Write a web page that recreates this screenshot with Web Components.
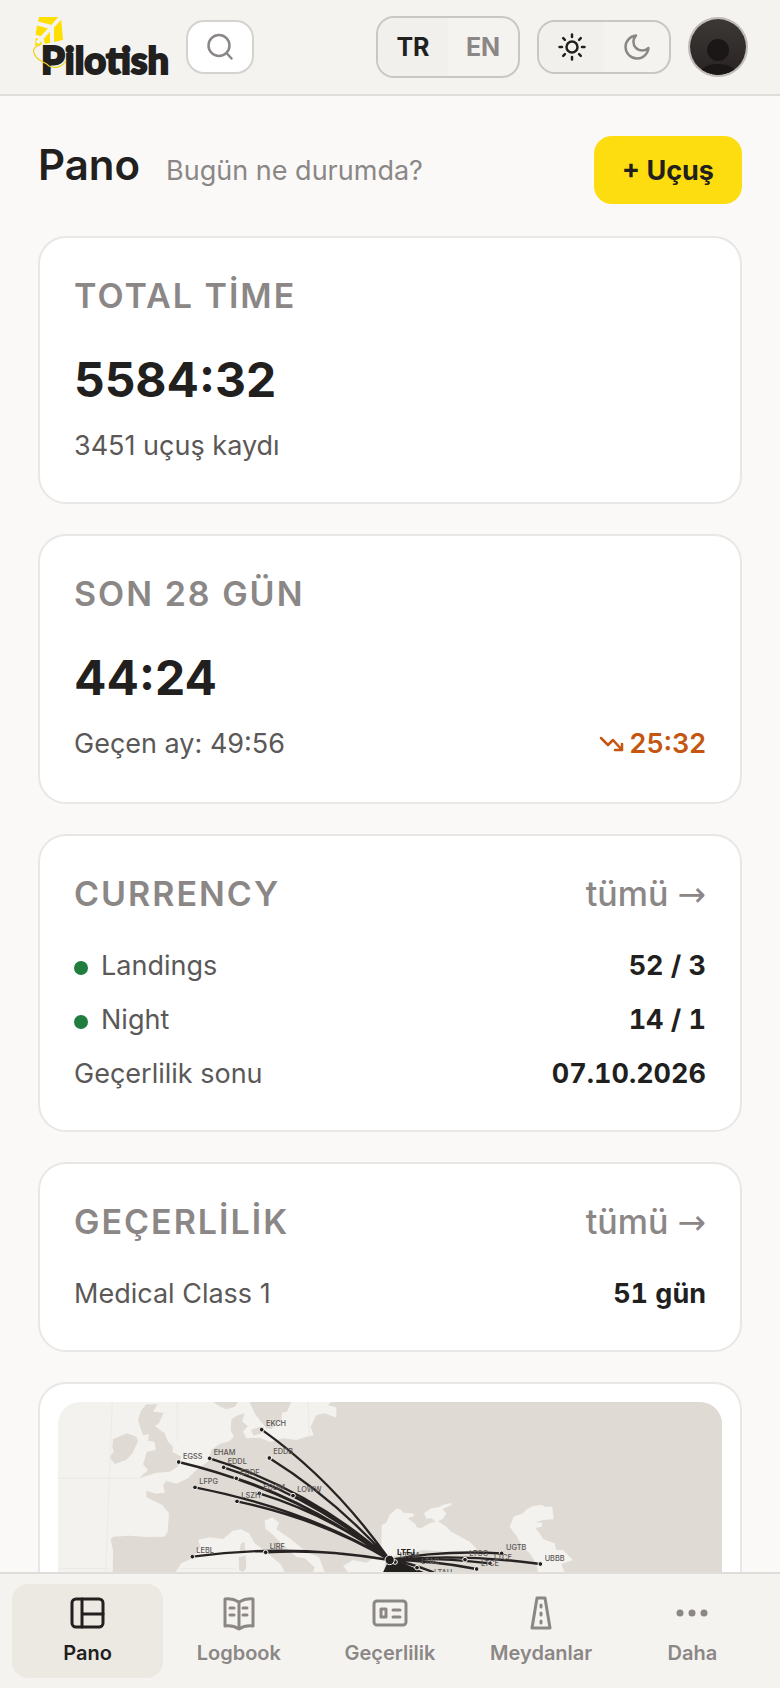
<!DOCTYPE html>
<html lang="tr">
<head>
<meta charset="utf-8">
<meta name="viewport" content="width=device-width, initial-scale=1">
<title>Pilotish</title>
<style>
  :root {
    --ink: #221f1f;
    --text: #5b5858;
    --muted: #8b8786;
    --bar: #f5f3ef;
    --line: #dfddda;
    --outline: #c9c7c4;
    --card-line: #e8e7e5;
    --accent: #fddd0f;
    --warn: #c4560f;
    --ok: #1f7d3f;
  }

  body {
    margin: 0;
    font-family: Inter, "Liberation Sans", sans-serif;
    color: var(--ink);
    background: #faf9f7;
  }
</style>
</head>
<body>
<app-shell>
  <top-bar slot="top"></top-bar>
  <page-head heading="Pano" note="Bugün ne durumda?" action="+ Uçuş"></page-head>
  <info-card heading="TOTAL TİME">
    <big-stat value="5584:32" note="3451 uçuş kaydı"></big-stat>
  </info-card>
  <info-card heading="SON 28 GÜN">
    <big-stat value="44:24" note="Geçen ay: 49:56" trend="25:32"></big-stat>
  </info-card>
  <info-card heading="CURRENCY" more="tümü">
    <data-row label="Landings" value="52 / 3" dot></data-row>
    <data-row label="Night" value="14 / 1" dot></data-row>
    <data-row label="Geçerlilik sonu" value="07.10.2026"></data-row>
  </info-card>
  <info-card heading="GEÇERLİLİK" more="tümü">
    <data-row label="Medical Class 1" value="51 gün"></data-row>
  </info-card>
  <route-map></route-map>
  <tab-bar slot="bottom"></tab-bar>
</app-shell>

<script>
class AppShell extends HTMLElement {
  constructor () {
    super()
    this.shadow = this.attachShadow({ mode: 'open' })
  }

  connectedCallback () {
    this.shadow.innerHTML =
    /*html*/`
    <style>
      :host {
        display: grid;
        grid-template-rows: auto minmax(0, 1fr) auto;
        height: 100vh;
      }

      main {
        display: flex;
        flex-direction: column;
        gap: 30px;
        padding: 40px 38px;
        overflow-y: auto;
        scrollbar-width: none;
      }
    </style>
    <slot name="top"></slot>
    <main><slot></slot></main>
    <slot name="bottom"></slot>
    `
  }
}

class PilotLogo extends HTMLElement {
  constructor () {
    super()
    this.shadow = this.attachShadow({ mode: 'open' })
  }

  connectedCallback () {
    this.shadow.innerHTML =
    /*html*/`
    <style>
      :host { display: block; }
      svg { display: block; overflow: visible; }
      text { font: 900 38px Lato, "Liberation Sans", sans-serif; fill: var(--ink); stroke: var(--ink); stroke-width: 2; }
    </style>
    <svg width="137" height="64" viewBox="0 0 137 64" role="img" aria-label="Pilotish">
      <path d="M7 2H29L31 25L3 31L4 16Z" fill="#ffdf00"/>
      <path d="M30 1L19 13L5 28M4 8L19 12M20 13L20 29" fill="none" stroke="#f5f3ef" stroke-width="4"/>
      <path d="M2 21L10 23L12 32" fill="none" stroke="#f5f3ef" stroke-width="3"/>
      <text x="9" y="59">Pilotish</text>
      <path d="M8 30C-1 33 1 37 4 42C9 48 12 46 17 51C23 54 30 52 34 46" fill="none" stroke="#f3cf20" stroke-width="1.200"/>
    </svg>
    `
  }
}

class TopBar extends HTMLElement {
  constructor () {
    super()
    this.shadow = this.attachShadow({ mode: 'open' })
  }

  connectedCallback () {
    this.shadow.innerHTML =
    /*html*/`
    <style>
      :host { display: block; }

      header {
        display: flex;
        align-items: center;
        gap: 17px;
        height: 94px;
        padding: 0 32px;
        background: var(--bar);
        border-bottom: 2px solid var(--line);
      }

      button {
        display: flex;
        align-items: center;
        justify-content: center;
        padding: 0;
        border: 0;
        background: none;
        color: var(--muted);
        font: 700 25px Inter, "Liberation Sans", sans-serif;
        cursor: pointer;
      }

      .search, .group {
        box-sizing: border-box;
        height: 54px;
        border: 2px solid var(--outline);
        border-radius: 18px;
        overflow: hidden;
      }

      .search { width: 68px; background: #fff; border-color: #d5d3d0; }
      .group { display: flex; width: 134px; }
      .lang { width: 144px; height: 62px; }
      .group button { flex: 1; }
      .group .on { color: var(--ink); background: #f2f0ed; }
      .space { flex: 1; }

      .avatar {
        box-sizing: border-box;
        width: 60px;
        height: 60px;
        border: 2px solid #bebbb9;
        border-radius: 50%;
        overflow: hidden;
      }

      svg { fill: none; stroke: currentColor; stroke-width: 2.5; stroke-linecap: round; stroke-linejoin: round; }
    </style>
    <header>
      <pilot-logo></pilot-logo>
      <button class="search" aria-label="Ara">
        <svg width="28" height="28" viewBox="0 0 28 28"><circle cx="13" cy="12.500" r="10.500"/><path d="M20.500 20L25.500 25.500"/></svg>
      </button>
      <span class="space"></span>
      <div class="group lang">
        <button class="on">TR</button>
        <button>EN</button>
      </div>
      <div class="group">
        <button class="on" aria-label="Açık tema">
          <svg width="28" height="28" viewBox="0 0 28 28"><circle cx="14" cy="14" r="5.500"/><path d="M14 1.500V4M14 24V26.500M1.500 14H4M24 14H26.500M5.200 5.200L6.900 6.900M21.100 21.100L22.800 22.800M5.200 22.800L6.900 21.100M21.100 6.900L22.800 5.200"/></svg>
        </button>
        <button aria-label="Koyu tema">
          <svg width="28" height="28" viewBox="0 0 28 28"><path d="M13 2.500A11.500 11.500 0 1 0 25.500 15A8.500 8.500 0 0 1 13 2.500Z"/></svg>
        </button>
      </div>
      <button class="avatar" aria-label="Profil">
        <svg width="56" height="56" viewBox="0 0 56 56">
          <defs><linearGradient id="shade" x1="0" y1="0" x2="0" y2="1"><stop offset="0" stop-color="#3c3836"/><stop offset="1" stop-color="#292423"/></linearGradient></defs>
          <path d="M0 0H56V56H0Z" fill="url(#shade)" stroke="none"/>
          <circle cx="28" cy="31" r="11" fill="#1b1716" stroke="none"/>
          <ellipse cx="28" cy="56" rx="19" ry="11" fill="#1b1716" stroke="none"/>
        </svg>
      </button>
    </header>
    `
  }
}

class PageHead extends HTMLElement {
  constructor () {
    super()
    this.shadow = this.attachShadow({ mode: 'open' })
  }

  connectedCallback () {
    this.shadow.innerHTML =
    /*html*/`
    <style>
      :host { display: flex; justify-content: space-between; padding-bottom: 2px; }
      .titles { display: flex; align-items: baseline; gap: 26px; height: 58px; }
      h1 { margin: 0; font-size: 42px; line-height: 58px; font-weight: 600; }
      p { margin: 0; font-size: 27px; line-height: 40px; color: var(--muted); }

      button {
        height: 68px;
        padding: 0 28px;
        border: 0;
        border-radius: 18px;
        background: var(--accent);
        color: var(--ink);
        font: 700 27px Inter, "Liberation Sans", sans-serif;
        cursor: pointer;
      }
    </style>
    <div class="titles">
      <h1>${this.getAttribute('heading')}</h1>
      <p>${this.getAttribute('note')}</p>
    </div>
    <button>${this.getAttribute('action')}</button>
    `
  }
}

class InfoCard extends HTMLElement {
  constructor () {
    super()
    this.shadow = this.attachShadow({ mode: 'open' })
  }

  connectedCallback () {
    const more = this.getAttribute('more')

    this.shadow.innerHTML =
    /*html*/`
    <style>
      :host {
        display: flex;
        flex-direction: column;
        gap: 32px;
        padding: 38px 34px 36px;
        background: #fff;
        border: 2px solid var(--card-line);
        border-radius: 28px;
      }

      .head { display: flex; justify-content: space-between; align-items: baseline; height: 40px; }
      h2, a { font-size: 34px; line-height: 40px; color: var(--muted); }
      h2 { margin: 0; font-weight: 600; letter-spacing: 2px; }
      a { font-weight: 500; text-decoration: none; }
      .arrow { font-family: "DejaVu Sans", sans-serif; line-height: 1; }
      .body { display: flex; flex-direction: column; gap: 14px; }
    </style>
    <div class="head">
      <h2>${this.getAttribute('heading')}</h2>
      ${more ? `<a href="#">${more} <span class="arrow">→</span></a>` : ''}
    </div>
    <div class="body"><slot></slot></div>
    `
  }
}

class BigStat extends HTMLElement {
  constructor () {
    super()
    this.shadow = this.attachShadow({ mode: 'open' })
  }

  connectedCallback () {
    const trend = this.getAttribute('trend')

    this.shadow.innerHTML =
    /*html*/`
    <style>
      :host { display: flex; flex-direction: column; gap: 14px; }
      strong { font-size: 48px; line-height: 64px; font-weight: 700; }
      .foot { display: flex; justify-content: space-between; font-size: 27px; line-height: 40px; color: var(--text); }
      .trend { display: flex; align-items: center; gap: 5px; padding-bottom: 2px; font-weight: 600; color: var(--warn); }
      svg { fill: none; stroke: currentColor; stroke-width: 2.5; stroke-linecap: round; stroke-linejoin: round; }
    </style>
    <strong>${this.getAttribute('value')}</strong>
    <div class="foot">
      <span>${this.getAttribute('note')}</span>
      ${trend ? `<span class="trend"><svg width="26" height="16" viewBox="0 0 26 16"><path d="M2 2L9 9L14 4L23 14M16 14H23V8"/></svg>${trend}</span>` : ''}
    </div>
    `
  }
}

class DataRow extends HTMLElement {
  constructor () {
    super()
    this.shadow = this.attachShadow({ mode: 'open' })
  }

  connectedCallback () {
    this.shadow.innerHTML =
    /*html*/`
    <style>
      :host { display: flex; justify-content: space-between; font-size: 27px; line-height: 40px; color: var(--text); }
      .label { display: flex; align-items: center; gap: 13px; }
      i { width: 14px; height: 14px; margin-top: 4px; border-radius: 50%; background: var(--ok); }
      b { font-weight: 700; font-variant-numeric: tabular-nums; color: var(--ink); }
    </style>
    <span class="label">${this.hasAttribute('dot') ? '<i></i>' : ''}${this.getAttribute('label')}</span>
    <b>${this.getAttribute('value')}</b>
    `
  }
}

// airports: code, x, y and the label's place, in map units
const airports = [
  ['EKCH', 696, 179, 709, 167],
  ['EDDB', 719, 264, 731, 251],
  ['EHAM', 540, 265, 552, 254],
  ['EDDL', 582, 292, 594, 281],
  ['EGSS', 447, 276, 460, 266],
  ['EDDF', 620, 325, 632, 315],
  ['LFPG', 496, 352, 509, 341],
  ['EDDM', 689, 370, 701, 360],
  ['LOWW', 790, 377, 803, 365],
  ['LSZH', 622, 394, 635, 383],
  ['LIRF', 708, 547, 720, 536],
  ['LEBL', 488, 560, 500, 548],
  ['UGTB', 1416, 550, 1429, 539],
  ['UBBB', 1532, 582, 1545, 572],
  ['LTCG', 1306, 569, 1319, 557],
  ['LTCE', 1381, 580, 1393, 569],
  ['LTCE', 1341, 597, 1354, 587],
  ['LTAC', 1162, 593, 1175, 581],
  ['LTAU', 1200, 627, 1213, 616],
  ['LTFM', 1096, 576, 1110, 564]
]

class RouteMap extends HTMLElement {
  constructor () {
    super()
    this.shadow = this.attachShadow({ mode: 'open' })
  }

  connectedCallback () {
    this.shadow.innerHTML =
    /*html*/`
    <style>
      :host {
        display: block;
        padding: 18px;
        background: #fff;
        border: 2px solid var(--card-line);
        border-radius: 28px;
      }

      svg { display: block; width: 100%; border-radius: 22px; background: #f3f2ee; }
      .land { fill: #dfdad4; }
      .sea { fill: #f3f2ee; }
      .grid { fill: none; stroke: #e8e5e0; stroke-width: 2; }
      .routes { fill: none; stroke: #272322; stroke-width: 7; stroke-linecap: round; }
      .dots { fill: #221f1f; stroke: #f3f2ee; stroke-width: 3; }
      text { font: 500 22px Inter, "Liberation Sans", sans-serif; fill: #5b5655; }
      .hub { font-weight: 700; font-size: 24px; fill: #221f1f; }
    </style>
    <svg viewBox="85 96 1992 1200" role="img" aria-label="Uçuş haritası">
      <path class="land" d="M243 1296L250 540L243 510L250 500L300 497L350 501L405 500L414 485L418 430L398 405L378 395L350 382L350 362L378 371L406 368L400 345L410 333L440 341L475 325L500 300L535 275L545 240L570 222L600 213L612 200L603 180L605 148L622 137L644 129L638 155L655 168L640 185L650 205L690 203L722 216L760 205L800 210L830 200L852 196L843 170L860 135L885 130L920 143V112L895 106L905 96H2077V1296Z"/>
      <path class="land" d="M660 96H785L772 125L757 128L755 150L725 178L710 175L690 150L675 130ZM550 96H625L615 110L590 118L568 108ZM663 180L692 170L697 190L672 197ZM350 103L384 103L370 125L402 128L388 160L375 168L405 190L415 215L430 230L428 245L455 260L445 290L420 305L380 308L350 318L328 325L355 300L340 283L345 268L352 245L378 240L375 215L355 212L358 192L340 196L325 150L335 120ZM248 232L250 208L292 190L320 200L325 215L308 250L290 270L255 282L240 262L252 245Z"/>
      <path class="sea" d="M438 606L455 580L488 565L512 530L505 510L540 502L580 507L610 482L635 478L658 490L675 520L715 550L755 585L765 606L760 900L430 900ZM705 452L728 442L748 458L740 478L780 505L830 545L868 562L885 606L850 606L855 592L825 565L800 560L760 525L725 490L708 478ZM940 588L970 570L1010 578L1040 558L1068 570L1050 700L970 700L955 606Z"/>
      <path class="land" d="M633 522L645 515L647 545L638 550L630 540ZM627 562L648 556L650 595L640 606L628 600Z"/>
      <path class="sea" d="M1055 530L1056 465L1070 458L1080 435L1102 415L1115 420L1120 428L1150 430L1154 438L1134 445L1158 462L1160 472L1173 475L1200 460L1225 454L1250 470L1265 485L1320 515L1342 537L1330 552L1250 545L1180 540L1120 555L1075 560ZM1183 430L1205 415L1228 412L1240 404L1266 399L1266 404L1238 418L1250 430L1240 446L1220 456L1205 445L1190 446ZM1440 470L1452 440L1480 430L1488 420L1510 408L1535 404L1545 410L1568 410L1572 448L1540 450L1518 457L1537 459V470L1517 474L1530 490L1540 507L1575 520L1580 540L1600 540L1630 570L1595 582L1605 606H1525L1520 580L1500 550L1478 530L1462 500Z"/>
      <path class="grid" d="M248 96L228 606M443 96V215M85 325H325M85 596H245M450 596H620M835 96L840 200"/>
      <path d="M1075 575L1040 650L1250 700L1330 660L1180 605L1100 570Z" fill="#221f1f"/>
      <g class="routes">
        <path d="M696 179Q910 330 1080 570M719 264Q920 390 1080 570M447 276Q800 360 1080 570M540 265Q850 360 1080 570M582 292Q850 380 1080 570M620 325Q850 400 1080 570M496 352Q840 420 1080 570M689 370Q900 435 1080 570M790 377Q950 450 1080 570M622 394Q880 450 1080 570"/>
        <path d="M488 560Q780 520 1080 570M708 547Q900 538 1080 570M1080 570Q1230 540 1416 550M1080 570Q1300 550 1532 582M1080 570Q1200 560 1381 580M1080 570Q1200 570 1341 597M1080 570Q1130 575 1210 606"/>
      </g>
      <g class="dots">${airports.map(([, x, y]) => `<circle cx="${x}" cy="${y}" r="7"/>`).join('')}<circle cx="1080" cy="570" r="14"/></g>
      <g>${airports.map(([code, , , x, y]) => `<text x="${x}" y="${y}">${code}</text>`).join('')}</g>
      <text class="hub" x="1102" y="555">LTFJ</text>
    </svg>
    `
  }
}

const tabs = [
  ['Pano', '<rect x="4" y="4" width="31" height="28" rx="4"/><path d="M14 4V32M14 19H35"/>'],
  ['Logbook', '<path d="M20 7Q13 3 6 4V31Q14 30 20 34Q26 30 34 31V4Q27 3 20 7ZM20 7V34M11 13H15M11 20H15M24 13H28M24 20H28"/>'],
  ['Geçerlilik', '<rect x="4" y="6" width="32" height="24" rx="3"/><path d="M11 14H16V22H11ZM23 15H30M23 22H30"/>'],
  ['Meydanlar', '<path d="M16 3H24L29 33H11ZM20 10V12M20 18V20M20 26V28"/>'],
  ['Daha', '<g fill="currentColor" stroke="none"><circle cx="8" cy="18" r="3.500"/><circle cx="20" cy="18" r="3.500"/><circle cx="32" cy="18" r="3.500"/></g>']
]

class TabBar extends HTMLElement {
  constructor () {
    super()
    this.shadow = this.attachShadow({ mode: 'open' })
  }

  connectedCallback () {
    this.shadow.innerHTML =
    /*html*/`
    <style>
      :host { display: block; }

      nav {
        display: grid;
        grid-template-columns: repeat(5, 1fr);
        padding: 10px 12px;
        background: var(--bar);
        border-top: 2px solid var(--line);
      }

      a {
        display: flex;
        flex-direction: column;
        align-items: center;
        gap: 8px;
        padding: 11px 0;
        border-radius: 16px;
        color: var(--muted);
        font-size: 20px;
        line-height: 28px;
        font-weight: 600;
        text-decoration: none;
      }

      .on { color: var(--ink); background: #ece9e3; }
      svg { fill: none; stroke: currentColor; stroke-width: 3; stroke-linecap: round; stroke-linejoin: round; }
    </style>
    <nav>
      ${tabs.map(([name, icon], i) => `<a href="#" class="${i === 0 ? 'on' : ''}"><svg width="40" height="36" viewBox="0 0 40 36">${icon}</svg>${name}</a>`).join('')}
    </nav>
    `
  }
}

customElements.define('pilot-logo', PilotLogo)
customElements.define('top-bar', TopBar)
customElements.define('page-head', PageHead)
customElements.define('big-stat', BigStat)
customElements.define('data-row', DataRow)
customElements.define('info-card', InfoCard)
customElements.define('route-map', RouteMap)
customElements.define('tab-bar', TabBar)
customElements.define('app-shell', AppShell)
</script>
</body>
</html>
